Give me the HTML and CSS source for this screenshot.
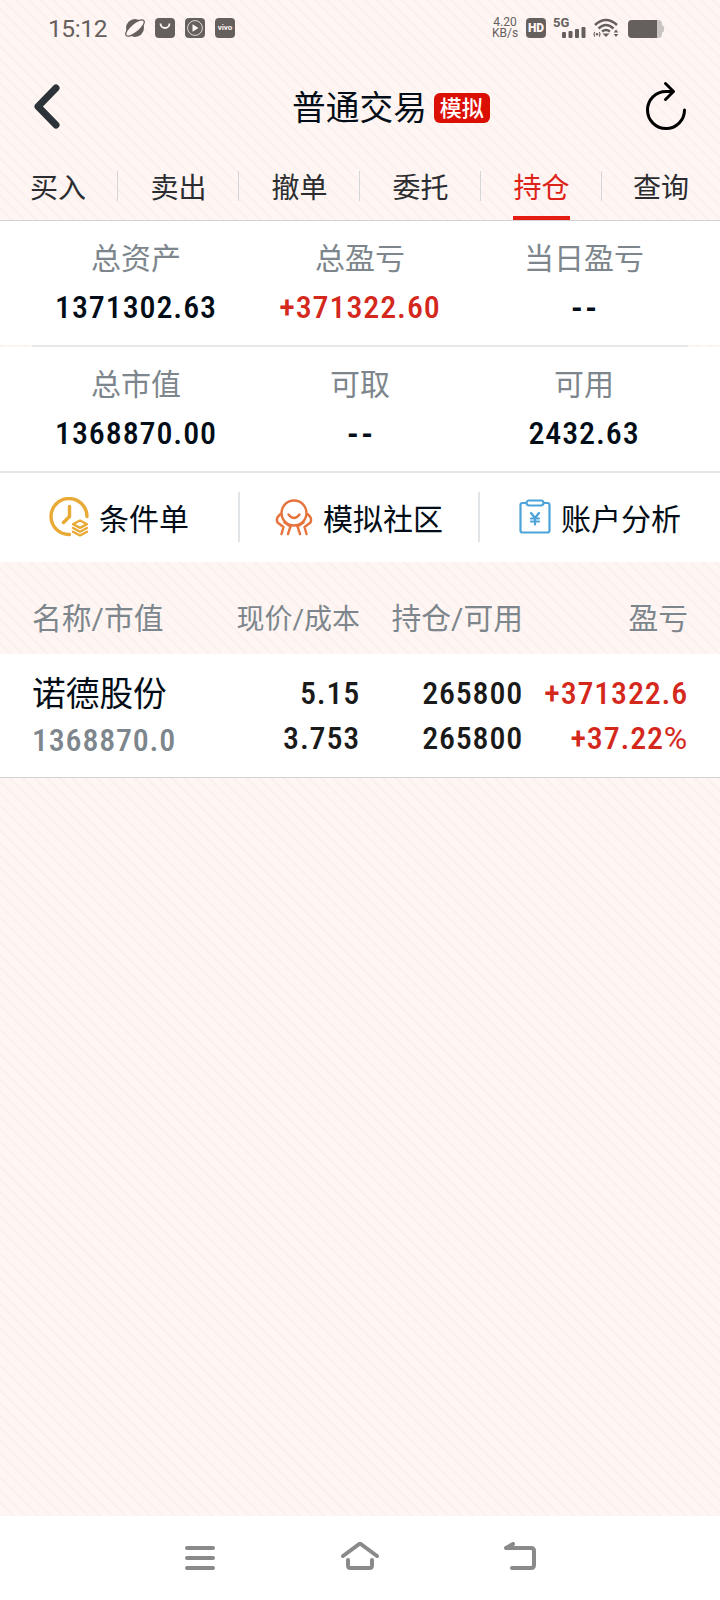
FILE: index.html
```
<!DOCTYPE html>
<html lang="zh-CN">
<head>
    <meta charset="UTF-8">
    <meta name="viewport" content="width=device-width, initial-scale=1.0">
    <title>普通交易</title>
    <link rel="stylesheet" href="styles.css">
</head>
<body>

    <!-- 状态栏 -->
    <div class="status-bar">
        <span class="clock">15:12</span>
        <svg class="status-icon" width="20" height="20" viewBox="0 0 20 20">
            <circle cx="10" cy="10" r="9" fill="#65605e"/>
            <ellipse cx="10" cy="10" rx="11.5" ry="4.4" transform="rotate(-40 10 10)" fill="#fff5f2" stroke="#65605e" stroke-width="1.3"/>
        </svg>
        <svg class="status-icon" width="20" height="20" viewBox="0 0 20 20">
            <rect width="20" height="20" rx="4" fill="#65605e"/>
            <path d="M5.5 5.5a4.5 4.5 0 0 0 9 0" fill="none" stroke="#fff5f2" stroke-width="1.8"/>
        </svg>
        <svg class="status-icon" width="20" height="20" viewBox="0 0 20 20">
            <rect width="20" height="20" rx="4" fill="#65605e"/>
            <circle cx="10" cy="10" r="7.4" fill="none" stroke="#fff5f2" stroke-width="0.8"/>
            <path d="M7.5 6.2v7.6l6-3.8z" fill="#fff5f2"/>
        </svg>
        <span class="vivo">vivo</span>
        <div class="status-right">
            <span class="speed">4.20<br>KB/s</span>
            <span class="hd">HD</span>
            <div class="signal">
                <span class="network">5G</span>
                <svg width="24" height="12" viewBox="0 0 24 12" fill="#65605e">
                    <rect x="0" y="6" width="4" height="6" rx="1"/>
                    <rect x="6.5" y="5" width="4" height="7" rx="1"/>
                    <rect x="13" y="3" width="4" height="9" rx="1"/>
                    <rect x="19.5" y="1" width="4" height="11" rx="1"/>
                </svg>
            </div>
            <svg class="wifi" width="26" height="20" viewBox="0 0 26 20" fill="none" stroke="#65605e">
                <path d="M2 7Q13-3 24 7M5.500 10.500Q13 3.500 20.500 10.500M9 13.500Q13 10.500 17 13.500" stroke-width="2.600"/>
                <path d="M9.500 15.500h7L13 19z" fill="#65605e" stroke="none"/>
                <path d="M23 11.500l2.300 3h-4.600zM23 19l2.300-3h-4.600z" fill="#65605e" stroke="none"/>
                <path d="M1.800 14q-1.500 2.300 0 4.600M6.200 14q1.500 2.300 0 4.600" stroke-width="1.100"/>
                <circle cx="4" cy="16.300" r="1.200" fill="#65605e" stroke="none"/>
            </svg>
            <svg class="battery" width="37" height="18" viewBox="0 0 37 18">
                <path d="M4 0h26q4 0 4 4v1.500q2 0 2 2v3q0 2-2 2V14q0 4-4 4H4q-4 0-4-4V4q0-4 4-4z" fill="#c9c4c2"/>
                <path d="M4 0h25v18H4q-4 0-4-4V4q0-4 4-4z" fill="#65605e"/>
            </svg>
        </div>
    </div>

    <!-- 标题 -->
    <div class="title-bar">
        <svg class="back" width="28" height="46" viewBox="0 0 28 46">
            <path d="M24 5L6 23.500l18 18.500" fill="none" stroke="#2c3338" stroke-width="7" stroke-linecap="round" stroke-linejoin="round"/>
        </svg>
        <div class="title">
            <h1>普通交易</h1>
            <span class="badge">模拟</span>
        </div>
        <svg class="refresh" width="44" height="52" viewBox="0 0 44 52">
            <path d="M27.500 11.500H22A18.500 18.500 0 1 0 40.500 30M21.500 3.500l8 8-8 8" fill="none" stroke="#000" stroke-width="3"  stroke-linecap="round" stroke-linejoin="round"/>
        </svg>
    </div>

    <!-- 标签 -->
    <div class="tabs">
        <div class="tab"><span>买入</span></div>
        <div class="tab"><span>卖出</span></div>
        <div class="tab"><span>撤单</span></div>
        <div class="tab"><span>委托</span></div>
        <div class="tab active"><span>持仓</span></div>
        <div class="tab"><span>查询</span></div>
    </div>

    <!-- 资产 -->
    <div class="summary">
        <div class="item"><div class="label">总资产</div><div class="value">1371302.63</div></div>
        <div class="item"><div class="label">总盈亏</div><div class="value red">+371322.60</div></div>
        <div class="item"><div class="label">当日盈亏</div><div class="value dash">--</div></div>
    </div>
    <div class="split"></div>
    <div class="summary">
        <div class="item"><div class="label">总市值</div><div class="value">1368870.00</div></div>
        <div class="item"><div class="label">可取</div><div class="value dash">--</div></div>
        <div class="item"><div class="label">可用</div><div class="value">2432.63</div></div>
    </div>

    <!-- 快捷入口 -->
    <div class="actions">
        <div class="action">
            <svg width="40" height="40" viewBox="0 0 40 40" fill="none" stroke="#e9a935" stroke-linecap="round" stroke-linejoin="round">
                <path d="M20.500 37.500A18 18 0 1 1 38 19.500M20.500 9.500v10l-6 6" stroke-width="3.400"/>
                <path d="M31 23.500l7 3.700-7 3.700-7-3.700zM24 31l7 3.700 7-3.700M24 34.800l7 3.700 7-3.700" stroke-width="2.400"/>
            </svg>
            <span>条件单</span>
        </div>
        <div class="action">
            <svg width="38" height="38" viewBox="0 0 38 38" fill="none" stroke="#e6723c" stroke-width="2.400" stroke-linecap="round" stroke-linejoin="round">
                <circle cx="19" cy="15" r="12.500"/>
                <path d="M13.500 16.500q5.500 7 11 0"/>
                <path d="M5.500 16Q.5 20 2.500 24.500L8.500 29 6.500 36M9.500 24.500l6 4-2.500 7.500M32.500 16q5 4 3 8.500L29.500 29l2 7M28.500 24.500l-6 4 2.500 7.500"/>
            </svg>
            <span>模拟社区</span>
        </div>
        <div class="action">
            <svg width="32" height="36" viewBox="0 0 32 36" fill="none" stroke="#4ba3d9" stroke-width="2.200" stroke-linejoin="round" stroke-linecap="round">
                <path d="M7 4H3.500Q1.500 4 1.500 6v25.500q0 2 2 2h25q2 0 2-2V6q0-2-2-2H25"/>
                <rect x="7.500" y="1.500" width="17" height="5" rx="2.500"/>
                <path d="M12 14l4 5 4-5M16 19v6.500M12 19.500h8M12 22.500h8"/>
            </svg>
            <span>账户分析</span>
        </div>
    </div>

    <!-- 持仓列表 -->
    <div class="list-row list-head">
        <div>名称/市值</div>
        <div class="price-head">现价/成本</div>
        <div>持仓/可用</div>
        <div>盈亏</div>
    </div>
    <div class="list-row stock">
        <div><p class="name">诺德股份</p><p class="market">1368870.0</p></div>
        <div><p>5.15</p><p>3.753</p></div>
        <div><p>265800</p><p>265800</p></div>
        <div class="red"><p>+371322.6</p><p>+37.22<span class="percent">%</span></p></div>
    </div>

    <!-- 系统导航 -->
    <div class="nav-bar">
        <svg width="40" height="32" viewBox="0 0 40 32">
            <path d="M7 6h26M7 16h26M7 26h26"/>
        </svg>
        <svg width="40" height="32" viewBox="0 0 40 32">
            <path d="M3 14L20 1.500 37 14M8 18v5.500q0 2.500 2.500 2.500h19q2.500 0 2.500-2.500V18"/>
        </svg>
        <svg width="40" height="32" viewBox="0 0 40 32">
            <path d="M13 2L6 6h25q3 0 3 3v14q0 3-3 3H12"/>
        </svg>
    </div>

</body>
</html>
```
FILE: styles.css
```
* {
    box-sizing: border-box;
}

body {
    margin: 0;
    width: 720px;
    height: 1600px;
    display: flex;
    flex-direction: column;
    font-family: Roboto, "Noto Sans CJK SC", sans-serif;
    color: #020d17;
    background: repeating-linear-gradient(45deg, #fff6f3 0, #fff6f3 6px, #f9efec 7.2px, #f9efec 7.6px, #fff6f3 8.8px);
}

h1, p {
    margin: 0;
}

svg {
    flex: none;
}

/* 状态栏 */
.status-bar {
    height: 56px;
    padding: 0 55px 0 48px;
    display: flex;
    align-items: center;
    color: #65605e;
}

.clock {
    width: 77px;
    font-size: 24.5px;
    line-height: 30px;
    letter-spacing: -0.4px;
    padding-top: 2px;
}

.status-icon {
    margin-right: 10px;
}

.vivo, .hd {
    width: 20px;
    height: 20px;
    border-radius: 4px;
    background-color: #65605e;
    color: #fff5f2;
    font-size: 8px;
    font-weight: bold;
    line-height: 19px;
    text-align: center;
}

.status-right {
    margin-left: auto;
    display: flex;
    align-items: center;
}

.speed {
    width: 26px;
    margin-right: 8px;
    font-size: 12px;
    line-height: 11px;
    text-align: center;
}

.hd {
    font-size: 12px;
    font-weight: 900;
    line-height: 20px;
}

.signal {
    width: 33px;
    height: 20px;
    margin: 0 7px;
    display: flex;
    flex-direction: column;
}

.signal svg {
    align-self: flex-end;
    margin-top: -2px;
}

.network {
    font-size: 13px;
    font-weight: bold;
    line-height: 10px;
}

.battery {
    margin-left: 9px;
    margin-top: 2px;
}

/* 标题 */
.title-bar {
    height: 96px;
    padding: 3px 32px 0;
    display: flex;
    align-items: center;
    justify-content: space-between;
}

.title {
    display: flex;
    align-items: center;
    gap: 7px;
    margin-left: 78px;
    padding-top: 4px;
}

.title h1 {
    font-size: 33.7px;
    font-weight: normal;
    line-height: 46px;
    padding-top: 2px;
}

.badge {
    width: 56px;
    height: 30px;
    border-radius: 6px;
    background-color: #dc0f05;
    color: #fff;
    font-size: 22px;
    font-weight: 500;
    line-height: 32px;
    text-align: center;
}

/* 标签 */
.tabs {
    height: 69px;
    display: flex;
    border-bottom: 1px solid #d2d2d2;
}

.tab {
    width: 121px;
    display: flex;
    justify-content: center;
    font-size: 28px;
    line-height: 74px;
    color: #2b2d30;
    background: linear-gradient(#d5d6d8, #d5d6d8) right 19px / 1px 30px no-repeat;
}

.tab:first-child, .tab:last-child {
    width: 118px;
}

.tab:first-child {
    padding-right: 2px;
}

.tab:last-child {
    background: none;
}

.tab.active span {
    color: #de2319;
    border-bottom: 4px solid #e61b12;
    height: 68px;
}

/* 资产 */
.summary {
    height: 124px;
    padding: 15px 24px 0;
    display: flex;
    background-color: #fff;
}

.item {
    width: 224px;
    text-align: center;
}

.label {
    font-size: 30px;
    line-height: 46px;
    color: #7d868c;
}

.value {
    font-size: 32px;
    font-weight: 500;
    font-stretch: 85%;
    line-height: 50px;
    letter-spacing: 0.9px;
}

.value.dash {
    font-size: 36px;
    line-height: 54px;
    letter-spacing: 3px;
    padding-left: 3px;
}

.red {
    color: #d5281c;
}

.split {
    height: 2px;
    background: linear-gradient(#e8e8e8, #e8e8e8) center / 656px 2px no-repeat;
}

/* 快捷入口 */
.actions {
    height: 91px;
    display: flex;
    border-top: 2px solid #e6e6e6;
    background-color: #fff;
}

.action {
    width: 240px;
    height: 50px;
    margin-top: 19px;
    display: flex;
    align-items: center;
    justify-content: center;
    gap: 10px;
    font-size: 30px;
    border-right: 2px solid #e2e5e8;
}

.action:last-child {
    border-right: none;
}

/* 持仓列表 */
.list-row {
    display: grid;
    grid-template-columns: 180px 148px 163px 165px;
    padding: 0 32px;
    text-align: right;
}

.list-row > div:first-child {
    text-align: left;
}

.list-head {
    height: 92px;
    padding-top: 34px;
    font-size: 29.8px;
    line-height: 46px;
    color: #7d868c;
}

.list-head .price-head {
    font-size: 28px;
    padding-top: 1px;
}

.stock {
    height: 124px;
    padding-top: 17px;
    background-color: #fff;
    border-bottom: 1px solid #d2d2d2;
    font-size: 32px;
    font-weight: 500;
    font-stretch: 85%;
    line-height: 45px;
    letter-spacing: 0.8px;
    color: #1a1a1a;
}

.stock .red {
    color: #d5281c;
}

.stock .name {
    color: #020d17;
    font-size: 33.7px;
    font-weight: normal;
    letter-spacing: 0;
    padding-top: 1px;
}

.stock .market {
    color: #7d868c;
    padding-top: 1px;
}

.percent {
    font-weight: normal;
    font-stretch: 100%;
}

/* 系统导航 */
.nav-bar {
    height: 84px;
    margin-top: auto;
    padding-top: 26px;
    display: flex;
    justify-content: center;
    gap: 120px;
    background-color: #fff;
}

.nav-bar path {
    fill: none;
    stroke: #8a8a8a;
    stroke-width: 4;
    stroke-linecap: round;
    stroke-linejoin: round;
}
```
